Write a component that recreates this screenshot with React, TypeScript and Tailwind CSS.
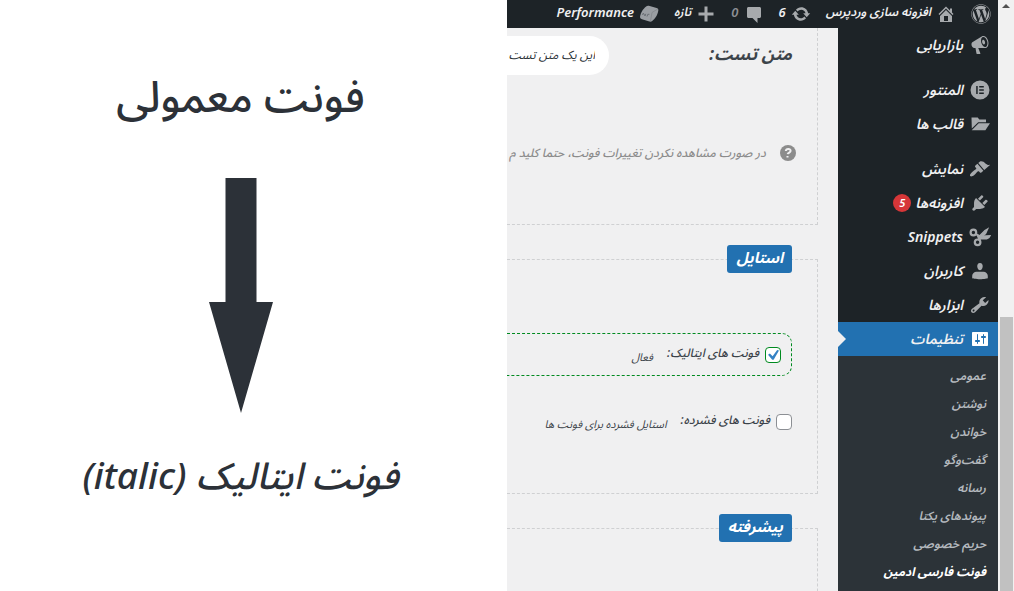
import type { ReactNode } from "react";
import { FaWordpress } from "react-icons/fa";

const paths = {
  home: "M16 8.5l1.53 1.53-1.06 1.06L10 4.6l-6.47 6.49-1.06-1.06L10 2.5l4 4v-2h2v4zm-6-2.46l6 5.99V18H4v-5.97zM12 17v-5H8v5h4z",
  update:
    "M10.2 3.28c3.53 0 6.43 2.61 6.92 6h2.08l-3.5 4-3.5-4h2.32c-.45-1.97-2.21-3.45-4.32-3.45-1.45 0-2.73.71-3.54 1.78L4.95 5.66C6.23 4.2 8.11 3.28 10.2 3.28zm-.4 13.44c-3.52 0-6.43-2.61-6.92-6H.8l3.5-4c1.17 1.33 2.33 2.67 3.5 4H5.48c.45 1.97 2.21 3.45 4.32 3.45 1.45 0 2.73-.71 3.54-1.78l1.71 1.95c-1.28 1.46-3.15 2.38-5.25 2.38z",
  comment:
    "M4.5 3h11c.83 0 1.5.67 1.5 1.5v8c0 .83-.67 1.5-1.5 1.5h-2v5l-5-5h-4c-.83 0-1.5-.67-1.5-1.5v-8C3 3.67 3.67 3 4.5 3z",
  plus: "M17.5 8.5v3h-6v6h-3v-6h-6v-3h6v-6h3v6z",
  megaphone:
    "M18.150 5.940c.46 1.620.38 3.220-.02 4.480-.42 1.280-1.260 2.180-2.300 2.480-.16.06-.26.06-.4.06-.06.02-.12.02-.18.02-.06.02-.14.02-.22.02h-6.800l2.220 5.500c.02.14-.06.26-.14.34-.08.1-.24.16-.34.16H6.950c-.1 0-.26-.06-.34-.16-.08-.08-.16-.2-.14-.34l-1-5.500H4.250l-.02-.02c-.5.06-1.080-.18-1.540-.62s-.88-1.080-1.060-1.880c-.24-.8-.2-1.560-.02-2.200.18-.62.58-1.080 1.060-1.300l.02-.02 9-5.400c.1-.06.18-.1.24-.16.06-.04.14-.08.24-.12.16-.08.28-.12.5-.18 1.040-.3 2.240.1 3.220.98s1.840 2.240 2.260 3.860zm-2.580 5.980h-.02c.4-.1.74-.34 1.040-.7.58-.7.86-1.760.86-3.040 0-.64-.1-1.300-.28-1.980-.34-1.360-1.020-2.500-1.780-3.240s-1.680-1.100-2.460-.88c-.82.22-1.400.96-1.700 2-.32 1.040-.28 2.360.06 3.720.38 1.360 1 2.500 1.800 3.240.78.74 1.620 1.100 2.480.88zm-2.540-7.080c.22-.04.42-.02.62.04.38.16.76.48 1.020 1s.42 1.200.42 1.780c0 .3-.04.56-.12.8-.18.48-.44.84-.86.94-.34.1-.8-.06-1.140-.4s-.64-.86-.78-1.500c-.18-.62-.12-1.240.02-1.720s.48-.84.82-.94z",
  folder:
    "M1.500 3.500h6.200l1.600 2H16v2.700H8.200L1.800 14.500zM8.700 9.200H20l-4.600 7H1.700l7-7z",
  brush:
    "M14.480 11.060L7.410 3.990l1.500-1.500c.5-.56 2.300-.47 3.510.32 1.210.8 1.430 1.280 2.910 2.100 1.180.64 2.450 1.260 4.450.85zm-.71.71L6.700 4.700 4.930 6.470c-.39.39-.39 1.020 0 1.410l1.060 1.060c.39.39.39 1.030 0 1.420-.6.6-1.430 1.110-2.210 1.690-.35.26-.7.53-1.010.84C1.430 14.230.4 16.080 1.400 17.070c.99 1 2.840-.03 4.180-1.360.31-.31.58-.66.85-1.020.57-.78 1.080-1.610 1.690-2.210.39-.39 1.020-.39 1.410 0l1.060 1.060c.39.39 1.020.39 1.410 0z",
  plugin:
    "M13.110 4.360L9.870 7.600 8 5.730l3.240-3.240c.35-.34 1.050-.2 1.560.32.52.51.66 1.210.31 1.550zm-8 1.770l.91-1.120 9.010 9.010-1.190.84c-.71.71-2.630 1.160-3.820 1.160H6.140L4.900 17.260c-.59.59-1.540.59-2.120 0-.59-.58-.59-1.530 0-2.120l1.240-1.240v-3.880c0-1.130.4-3.190 1.090-3.890zm7.260 3.970l3.240-3.240c.34-.35 1.040-.21 1.550.31.52.51.66 1.210.31 1.550l-3.240 3.250z",
  user: "M10 9.250c-2.270 0-2.730-3.440-2.730-3.440C7 4.020 7.820 2 9.970 2c2.160 0 2.980 2.020 2.710 3.810 0 0-.41 3.440-2.680 3.440zm-3.500 1.550h7c2.200 0 4.300 1.800 4.300 4v2.400s-3.900 1-7.800 1-7.800-1-7.800-1v-2.400c0-2.200 2.100-4 4.300-4z",
  wrench:
    "M16.680 9.770c-1.340 1.340-3.300 1.670-4.950.99l-5.410 6.520c-.99.99-2.590.99-3.580 0s-.99-2.590 0-3.570l6.520-5.420c-.68-1.650-.35-3.610.99-4.950 1.280-1.280 3.120-1.620 4.720-1.060l-2.890 2.890 2.820 2.820 2.860-2.870c.53 1.580.18 3.390-1.080 4.650zM3.810 16.210c.4.39 1.040.39 1.430 0 .4-.4.4-1.040 0-1.430-.39-.4-1.030-.4-1.430 0-.39.39-.39 1.030 0 1.430z",
  settings:
    "M18 16V4c0-.55-.45-1-1-1H3c-.55 0-1 .45-1 1v12c0 .55.45 1 1 1h14c.55 0 1-.45 1-1zM8 11h1c.55 0 1 .45 1 1s-.45 1-1 1H8v1.500c0 .28-.22.5-.5.5s-.5-.22-.5-.5V13H6c-.55 0-1-.45-1-1s.45-1 1-1h1V5.500c0-.28.22-.5.5-.5s.5.22.5.5V11zm5-2h-1c-.55 0-1-.45-1-1s.45-1 1-1h1V5.500c0-.28.22-.5.5-.5s.5.22.5.5V7h1c.55 0 1 .45 1 1s-.45 1-1 1h-1v5.500c0 .28-.22.5-.5.5s-.5-.22-.5-.5V9z",
  elementor:
    "M10 .5a9.500 9.500 0 100 19 9.500 9.500 0 000-19zM6.200 6v8h1.500V6zM9.200 6v1.500h4.600V6zM9.200 9.250v1.500h4.600v-1.500zM9.200 12.500V14h4.600v-1.500z",
};

function Icon({ name, slant = false }: { name: keyof typeof paths; slant?: boolean }) {
  return (
    <svg viewBox="0 0 20 20" aria-hidden="true" className="size-5 shrink-0 fill-current">
      <path fillRule="evenodd" d={paths[name]} transform={slant ? "translate(1.500 0) skewX(-9)" : undefined} />
    </svg>
  );
}

function PerformanceIcon() {
  return (
    <svg viewBox="0 0 20 20" aria-hidden="true" className="size-5 shrink-0">
      <path
        d="M9.800 1.800L17.600 4c1.400.5 2 1.400 1.700 2.700-.5 2.400-1.200 4.300-2.300 6-1 1.600-2.200 3-3.800 4.300-.8.700-1.800.9-2.800.6L3 15.300c-1.500-.5-2.200-1.500-1.900-3 .4-1.900 1-3.500 2-5.200C4.200 5.300 5.400 3.900 7.100 2.500c.8-.7 1.700-1 2.700-.7z"
        className="fill-[#9a9ea3]"
      />
      <path d="M3.500 11l.8-2 1.700 3 .8-2.200M8 12.500l.8-2.200h1.600" className="fill-none stroke-[#6b7076]" />
      <path d="M11.500 17l1.500-8.500L18.800 5" className="fill-none stroke-[#888c91]" />
    </svg>
  );
}

function Scissors() {
  return (
    <svg viewBox="0 0 22 20" aria-hidden="true" className="h-5 w-[22px] shrink-0 fill-none stroke-current">
      <circle cx="4.400" cy="5.500" r="2.800" strokeWidth="2.200" />
      <circle cx="8.600" cy="15.300" r="2.800" strokeWidth="2.200" />
      <path d="M7 7l4.500 2.500L20.500 9c-1 2-2.500 2.600-4.500 2.600h-4.500L9.500 13" strokeWidth="2" className="fill-current" />
      <path d="M10 9.500L16 3.500l2.500-1.500-2 4.500-4 3.500z" strokeWidth="1.500" className="fill-current" />
    </svg>
  );
}

function BarItem({ icon, children, dim = false, latin = false }: { icon: ReactNode; children: ReactNode; dim?: boolean; latin?: boolean }) {
  return (
    <a href="#" className="flex items-center gap-[5px]">
      <span className="text-[#a7aaad]">{icon}</span>
      <span className={`pb-1 ${latin ? "text-[13px]" : "text-xs"} ${dim ? "text-[#8c8f94]" : ""}`}>{children}</span>
    </a>
  );
}

function MenuItem({ icon, label, badge, active = false }: { icon: ReactNode; label: string; badge?: string; active?: boolean }) {
  return (
    <li className={active ? "relative bg-[#2271b1]" : ""}>
      <a href="#" className="flex h-[34px] items-center px-[7px] text-sm font-semibold text-[#f0f0f1]">
        <span className={`flex w-[22px] justify-center ${active ? "text-white" : "text-[#a7aaad]"}`}>{icon}</span>
        <span className="ms-[6px] pb-px leading-5">{label}</span>
        {badge && (
          <span className="ms-1 flex size-[18px] items-center justify-center rounded-full bg-[#d63638] text-[11px] text-white">{badge}</span>
        )}
      </a>
      {active && (
        <svg viewBox="0 0 8 16" aria-hidden="true" className="absolute top-[9px] left-0 h-4 w-2 fill-[#f0f0f1]">
          <path d="M0 0l8 8-8 8z" />
        </svg>
      )}
    </li>
  );
}

function Panel({ legend, className, children }: { legend?: string; className: string; children?: ReactNode }) {
  return (
    <fieldset className={`min-w-0 shrink-0 border border-l-0 border-dashed border-[#cfd0d2] pr-[25px] ${className}`}>
      {legend && (
        <legend className="flex h-7 items-center rounded-[3px] bg-[#2271b1] px-[9px] pb-1 text-[15px] leading-6 font-bold text-white">
          {legend}
        </legend>
      )}
      {children}
    </fieldset>
  );
}

function Option({ id, label, hint, checked = false }: { id: string; label: string; hint: string; checked?: boolean }) {
  return (
    <div className="flex items-center whitespace-nowrap text-[#3c434a]">
      <span className="relative flex size-4 shrink-0">
        <input
          id={id}
          type="checkbox"
          defaultChecked={checked}
          className="peer size-4 appearance-none rounded-[4px] border border-[#8c8f94] bg-white checked:border-[#008a20]"
        />
        <svg viewBox="0 0 20 20" aria-hidden="true" className="pointer-events-none absolute inset-0 hidden size-4 fill-[#3582c4] peer-checked:block">
          <path d="M15.200 3.600l2.300.9-6.700 11.500H9L3.800 9.800l2.300-1.700 3.400 3.600z" />
        </svg>
      </span>
      <label htmlFor={id} className="ms-[6px] pb-1 text-xs leading-5 font-medium">
        {label}
      </label>
      <span className="ms-[14px] pt-1 text-[11px] leading-5">{hint}</span>
    </div>
  );
}

const submenu = ["عمومی", "نوشتن", "خواندن", "گفت‌وگو", "رسانه", "پیوندهای یکتا", "حریم خصوصی"];

export default function App() {
  return (
    <div className="flex h-screen overflow-hidden bg-white font-['Noto_Sans','Noto_Sans_Arabic','DejaVu_Sans',sans-serif]">
      <section dir="rtl" className="flex w-1/2 flex-col items-center pt-[60px] pr-[26px] text-[#2c3138]">
        <h1 className="text-[43px] leading-[72px] font-medium">فونت معمولی</h1>
        <svg viewBox="0 0 64 235" aria-hidden="true" className="mt-[46px] h-[235px] w-16 fill-[#2c3138]">
          <path d="M16.500 0h31v124H64L32 235 0 124h16.500z" />
        </svg>
        <h2 className="mt-8 text-[37px] leading-[60px] font-medium italic">فونت ایتالیک (italic)</h2>
      </section>

      <section dir="rtl" className="flex w-1/2 italic">
        <div aria-hidden="true" className="flex w-4 shrink-0 flex-col items-center bg-[#f1f1f1]">
          <svg viewBox="0 0 8 4" className="mt-1 h-1 w-2 fill-[#505050]">
            <path d="M4 0l4 4H0z" />
          </svg>
          <div className="mt-[309px] w-[13px] flex-1 bg-[#c1c1c1]" />
        </div>

        <div className="flex min-w-0 flex-1 flex-col bg-[#f0f0f1]">
          <header className="flex h-7 shrink-0 items-center gap-[15px] bg-[#1d2327] pr-[7px] leading-5 font-semibold whitespace-nowrap text-[#f0f0f1]">
            <a href="#" aria-label="وردپرس" className="text-[#a7aaad]">
              <FaWordpress className="size-5" />
            </a>
            <BarItem icon={<Icon name="home" />}>افزونه سازی وردپرس</BarItem>
            <BarItem icon={<Icon name="update" />} latin>6</BarItem>
            <BarItem icon={<Icon name="comment" />} latin dim>0</BarItem>
            <BarItem icon={<Icon name="plus" />}>تازه</BarItem>
            <BarItem icon={<PerformanceIcon />} latin>Performance</BarItem>
          </header>

          <div className="flex min-h-0 flex-1">
            <nav className="w-40 shrink-0 bg-[#1d2327]">
              <ul>
                <MenuItem icon={<Icon name="megaphone" />} label="بازاریابی" />
                <li className="h-[11px]" />
                <MenuItem icon={<Icon name="elementor" />} label="المنتور" />
                <MenuItem icon={<Icon name="folder" />} label="قالب ها" />
                <li className="h-[11px]" />
                <MenuItem icon={<Icon name="brush" slant />} label="نمایش" />
                <MenuItem icon={<Icon name="plugin" />} label="افزونه‌ها" badge="5" />
                <MenuItem icon={<Scissors />} label="Snippets" />
                <MenuItem icon={<Icon name="user" />} label="کاربران" />
                <MenuItem icon={<Icon name="wrench" slant />} label="ابزارها" />
                <MenuItem icon={<Icon name="settings" />} label="تنظیمات" active />
              </ul>
              <ul className="h-full bg-[#2c3338] px-3 pt-[6px] text-xs leading-7 font-semibold whitespace-nowrap text-[#b4b9be]">
                {submenu.map((label) => (
                  <li key={label}>
                    <a href="#">{label}</a>
                  </li>
                ))}
                <li className="font-bold text-white">
                  <a href="#">فونت فارسی ادمین</a>
                </li>
              </ul>
            </nav>

            <main className="flex min-w-0 flex-1 flex-col gap-5 overflow-hidden pr-5">
              <Panel className="h-[197px] border-t-0 pt-2">
                <div className="flex items-center">
                  <label htmlFor="sample" className="w-[183px] shrink-0 pb-1 text-[17px] leading-6 font-bold text-[#3c434a]">
                    متن تست:
                  </label>
                  <input
                    id="sample"
                    defaultValue="این یک متن تست"
                    className="h-[39px] min-w-0 flex-1 rounded-r-full bg-white pr-[14px] text-xs text-[#2c3338] italic"
                  />
                </div>
                <p className="-mr-1 mt-[68px] flex items-center gap-[14px] text-xs leading-5 font-medium whitespace-nowrap text-[#8c8c8c]">
                  <svg viewBox="0 0 16 16" aria-hidden="true" className="size-4 shrink-0">
                    <circle cx="8" cy="8" r="8" className="fill-[#8c8c8c]" />
                    <path d="M5.800 6c.3-3 5-2.600 4.800-.1-.1 1.700-2.600 1.500-2.900 3.300M7.500 11v1.600" className="fill-none stroke-[#f0f0f1] stroke-2" />
                  </svg>
                  در صورت مشاهده نکردن تغییرات فونت، حتما کلید م
                </p>
              </Panel>

              <Panel legend="استایل" className="h-[249px]">
                <div className="mt-[60px] flex h-[43px] items-center rounded-r-[10px] border border-l-0 border-dashed border-[#008a20] pr-[10px]">
                  <Option id="italic" label="فونت های ایتالیک:" hint="فعال" checked />
                </div>
                <div className="mt-[34px]">
                  <Option id="condensed" label="فونت های فشرده:" hint="استایل فشرده برای فونت ها" />
                </div>
              </Panel>

              <Panel legend="پیشرفته" className="h-[249px]" />
            </main>
          </div>
        </div>
      </section>
    </div>
  );
}
